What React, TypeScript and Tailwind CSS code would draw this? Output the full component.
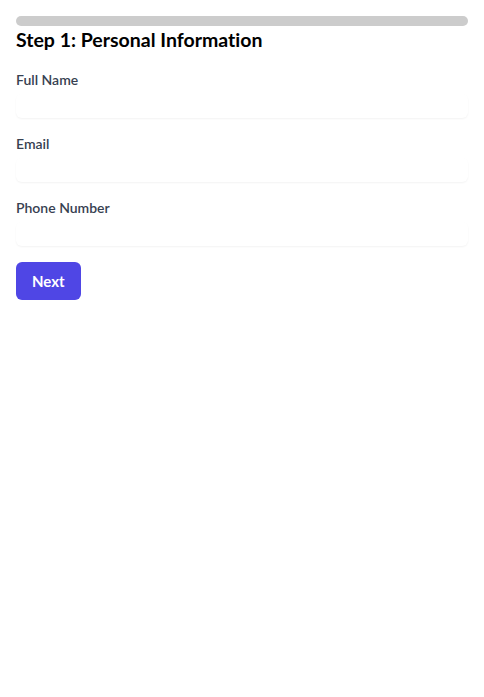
import React from "react";

export default function App() {
  return (
    <div className="min-h-[697px] bg-white p-4 [font-variant-ligatures:none]" style={{ fontFamily: 'Lato, "Noto Sans", sans-serif' }}>
      <div className="h-2.5 w-full rounded-full bg-[#cccccc]" />
      <h2 className="mb-4 text-[19.5px] font-bold leading-7 text-black">Step 1: Personal Information</h2>
      <div className="mb-4">
        <label className="block text-sm font-semibold leading-5 text-[#374151]">Full Name</label>
        <input type="text" className="mt-1 block h-6 w-full rounded-md shadow-[0_1px_2px_rgba(0,0,0,0.05)] outline-none" />
      </div>
      <div className="mb-4">
        <label className="block text-sm font-semibold leading-5 text-[#374151]">Email</label>
        <input type="email" className="mt-1 block h-6 w-full rounded-md shadow-[0_1px_2px_rgba(0,0,0,0.05)] outline-none" />
      </div>
      <div className="mb-4">
        <label className="block text-sm font-semibold leading-5 text-[#374151]">Phone Number</label>
        <input type="tel" className="mt-1 block h-6 w-full rounded-md shadow-[0_1px_2px_rgba(0,0,0,0.05)] outline-none" />
      </div>
      <button className="rounded-md bg-[#4f46e5] px-4 py-2 text-[15px] font-bold leading-[22px] text-white">Next</button>
    </div>
  );
}
